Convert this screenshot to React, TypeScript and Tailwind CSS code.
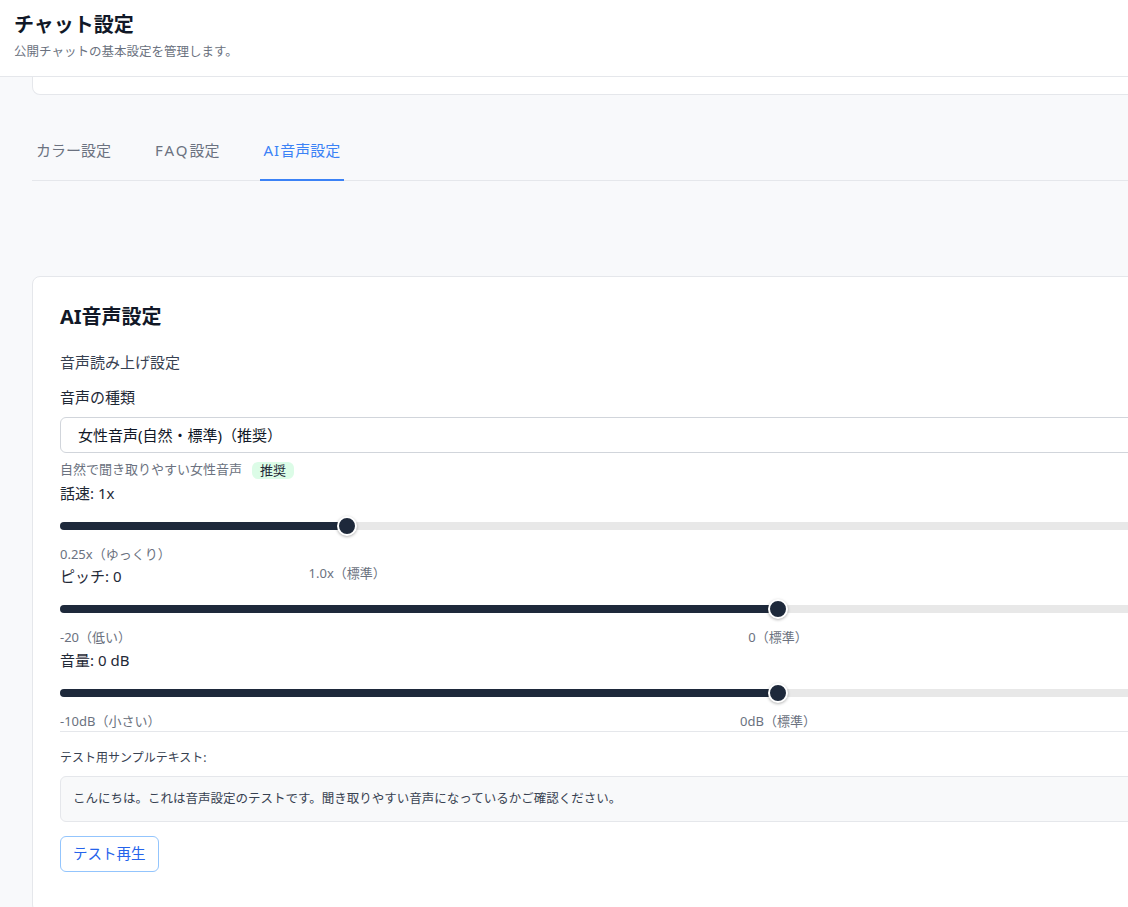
import React from "react";

const FONT = { fontFamily: '"Noto Sans", "Noto Sans CJK JP", sans-serif' };

type SliderProps = {
  label: string;
  pct: number;
  left: string;
  mid: string;
  right: string;
  midPct: number;
  midTop: number;
};

function Slider({ label, pct, left, mid, right, midPct, midTop }: SliderProps) {
  return (
    <div>
      <div className="text-[15px] leading-[22px] text-[#1f2937]">{label}</div>
      <div className="relative mt-[12px] h-5">
        <div className="absolute left-0 right-0 top-[6px] h-2 rounded-full bg-[#e8e8e8]" />
        <div
          className="absolute left-0 top-[6px] h-2 rounded-full bg-[#1e293b]"
          style={{ width: `${pct}%` }}
        />
        <div
          className="absolute top-0 h-5 w-5 -translate-x-1/2 rounded-full border-2 border-white bg-[#1e293b] shadow-[0_1px_3px_rgba(0,0,0,0.3)]"
          style={{ left: `${pct}%` }}
        />
      </div>
      <div className="relative mt-[9px] flex h-[18px] justify-between text-[13px] leading-[18px] text-[#6b7280]">
        <span>{left}</span>
        <span
          className="absolute -translate-x-1/2 whitespace-nowrap"
          style={{ left: `${midPct}%`, top: midTop }}
        >
          {mid}
        </span>
        <span>{right}</span>
      </div>
    </div>
  );
}

export default function App() {
  return (
    <div className="min-h-screen w-max min-w-full bg-[#f8f9fb]" style={FONT}>
      <header className="border-b border-[#e5e7eb] bg-white px-[14px] pb-4 pt-[11px]">
        <h1 className="text-[20px] font-bold leading-[28px] text-[#111827]">チャット設定</h1>
        <p className="mt-[5px] text-[12.5px] leading-[16px] text-[#6b7280]">
          公開チャットの基本設定を管理します。
        </p>
      </header>
      <main className="ml-8 w-[1492px] pb-10">
        <div className="h-[18px] rounded-b-lg border-x border-b border-[#e5e7eb] bg-white" />
        <nav className="mt-[35px] flex gap-9 border-b border-[#e5e7eb]">
          <button className="px-1 pb-[19px] pt-[9px] text-[15px] leading-[22px] text-[#6b7280]">
            カラー設定
          </button>
          <button className="px-1 pb-[19px] pt-[9px] text-[15px] leading-[22px] text-[#6b7280]">
            <span className="tracking-[2px]">FAQ</span>設定
          </button>
          <button className="-mb-px border-b-2 border-[#3b82f6] px-1 pb-[18px] pt-[9px] text-[15px] leading-[22px] text-[#3b82f6]">
            <span className="tracking-[1px]">AI</span>音声設定
          </button>
        </nav>
        <section className="mt-[95px] rounded-lg border border-[#e5e7eb] bg-white px-[27px] pb-10 pt-[26px]">
          <h2 className="text-[20px] font-bold leading-[28px] text-[#111827]">AI音声設定</h2>
          <div className="mt-[21px] text-[15px] leading-[20px] text-[#374151]">音声読み上げ設定</div>
          <div className="mt-[14px] text-[15px] leading-[22px] text-[#1f2937]">音声の種類</div>
          <div className="mt-[9px] flex h-[36px] items-center rounded-md border border-[#d1d5db] bg-white pl-[17px] pr-4 text-[15px] text-[#111827]">
            女性音声(自然・標準)（推奨）
          </div>
          <div className="mt-[7px] flex h-5 items-center gap-[10px] text-[13px] text-[#6b7280]">
            <span>自然で聞き取りやすい女性音声</span>
            <span className="rounded-md bg-[#dcfce7] px-[8px] text-[13px] leading-[17px] text-[#1f2937]">
              推奨
            </span>
          </div>
          <div className="mt-[2px]">
            <Slider
              label="話速: 1x"
              pct={20}
              left="0.25x（ゆっくり）"
              mid="1.0x（標準）"
              right="4.0x（速い）"
              midPct={20}
              midTop={19}
            />
          </div>
          <div className="mt-[2px]">
            <Slider
              label="ピッチ: 0"
              pct={50}
              left="-20（低い）"
              mid="0（標準）"
              right="+20（高い）"
              midPct={50}
              midTop={0}
            />
          </div>
          <div className="mt-[3px]">
            <Slider
              label="音量: 0 dB"
              pct={50}
              left="-10dB（小さい）"
              mid="0dB（標準）"
              right="+10dB（大きい）"
              midPct={50}
              midTop={0}
            />
          </div>
          <div className="mt-px border-t border-[#e5e7eb] pt-[17px]">
            <div className="text-[12px] leading-[18px] text-[#374151]">テスト用サンプルテキスト:</div>
            <div className="mt-[9px] rounded-md border border-[#e5e7eb] bg-[#f8f9fa] px-3 py-3 text-[12.5px] leading-[20px] text-[#374151]">
              こんにちは。これは音声設定のテストです。聞き取りやすい音声になっているかご確認ください。
            </div>
            <button className="mt-[14px] h-9 rounded-md border border-[#93c5fd] bg-white px-[12px] text-[14.5px] text-[#2563eb]">
              テスト再生
            </button>
          </div>
        </section>
      </main>
    </div>
  );
}
